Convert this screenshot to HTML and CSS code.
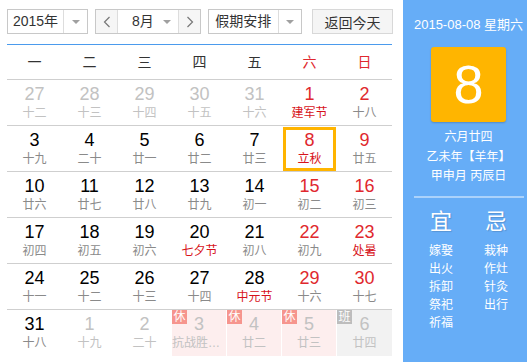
FILE: index.html
```html
<!DOCTYPE html>
<head>
    <meta charset="UTF-8">
    <title>万年历</title>
    <link rel="stylesheet" href="styles.css">
</head>
<body>
    <div class="wrap">
        <div class="main">
            <div class="toolbar">
                <div class="select year">
                    <span class="select-text">2015年</span>
                    <span class="select-arrow"><i class="caret"></i></span>
                </div>
                <div class="select month">
                    <span class="step"><svg width="8" height="12" viewBox="0 0 8 12"><polyline points="6.5,1 1.5,6 6.5,11" fill="none" stroke="#777" stroke-width="1.2"/></svg></span>
                    <span class="select-text month-text">8月<i class="caret"></i></span>
                    <span class="step"><svg width="8" height="12" viewBox="0 0 8 12"><polyline points="1.5,1 6.5,6 1.5,11" fill="none" stroke="#777" stroke-width="1.2"/></svg></span>
                </div>
                <div class="select holiday">
                    <span class="select-text">假期安排</span>
                    <span class="select-arrow"><i class="caret"></i></span>
                </div>
                <button class="today-btn">返回今天</button>
            </div>

            <div class="calendar">
                <div class="week">
                    <span>一</span><span>二</span><span>三</span><span>四</span><span>五</span><span class="red">六</span><span class="red">日</span>
                </div>
                <div class="row">
                    <div class="day other"><b>27</b><em>十二</em></div>
                    <div class="day other"><b>28</b><em>十三</em></div>
                    <div class="day other"><b>29</b><em>十四</em></div>
                    <div class="day other"><b>30</b><em>十五</em></div>
                    <div class="day other"><b>31</b><em>十六</em></div>
                    <div class="day weekend fest"><b>1</b><em>建军节</em></div>
                    <div class="day weekend"><b>2</b><em>十八</em></div>
                </div>
                <div class="row">
                    <div class="day"><b>3</b><em>十九</em></div>
                    <div class="day"><b>4</b><em>二十</em></div>
                    <div class="day"><b>5</b><em>廿一</em></div>
                    <div class="day"><b>6</b><em>廿二</em></div>
                    <div class="day"><b>7</b><em>廿三</em></div>
                    <div class="day weekend fest selected"><b>8</b><em>立秋</em></div>
                    <div class="day weekend"><b>9</b><em>廿五</em></div>
                </div>
                <div class="row">
                    <div class="day"><b>10</b><em>廿六</em></div>
                    <div class="day"><b>11</b><em>廿七</em></div>
                    <div class="day"><b>12</b><em>廿八</em></div>
                    <div class="day"><b>13</b><em>廿九</em></div>
                    <div class="day"><b>14</b><em>初一</em></div>
                    <div class="day weekend"><b>15</b><em>初二</em></div>
                    <div class="day weekend"><b>16</b><em>初三</em></div>
                </div>
                <div class="row">
                    <div class="day"><b>17</b><em>初四</em></div>
                    <div class="day"><b>18</b><em>初五</em></div>
                    <div class="day"><b>19</b><em>初六</em></div>
                    <div class="day fest"><b>20</b><em>七夕节</em></div>
                    <div class="day"><b>21</b><em>初八</em></div>
                    <div class="day weekend"><b>22</b><em>初九</em></div>
                    <div class="day weekend fest"><b>23</b><em>处暑</em></div>
                </div>
                <div class="row">
                    <div class="day"><b>24</b><em>十一</em></div>
                    <div class="day"><b>25</b><em>十二</em></div>
                    <div class="day"><b>26</b><em>十三</em></div>
                    <div class="day"><b>27</b><em>十四</em></div>
                    <div class="day fest"><b>28</b><em>中元节</em></div>
                    <div class="day weekend"><b>29</b><em>十六</em></div>
                    <div class="day weekend"><b>30</b><em>十七</em></div>
                </div>
                <div class="row last">
                    <div class="day"><b>31</b><em>十八</em></div>
                    <div class="day other"><b>1</b><em>十九</em></div>
                    <div class="day other"><b>2</b><em>二十</em></div>
                    <div class="day other rest"><span class="tag">休</span><b>3</b><em class="long">抗战胜…</em></div>
                    <div class="day other rest"><span class="tag">休</span><b>4</b><em>廿二</em></div>
                    <div class="day other rest"><span class="tag">休</span><b>5</b><em>廿三</em></div>
                    <div class="day other work"><span class="tag">班</span><b>6</b><em>廿四</em></div>
                </div>
            </div>
        </div>

        <div class="side">
            <p class="side-date">2015-08-08 星期六</p>
            <div class="big-day">8</div>
            <div class="lunar">
                <p>六月廿四</p>
                <p>乙未年【羊年】</p>
                <p>甲申月 丙辰日</p>
            </div>
            <div class="advice">
                <div class="advice-col">
                    <h2>宜</h2>
                    <p>嫁娶</p>
                    <p>出火</p>
                    <p>拆卸</p>
                    <p>祭祀</p>
                    <p>祈福</p>
                </div>
                <div class="advice-col">
                    <h2>忌</h2>
                    <p>栽种</p>
                    <p>作灶</p>
                    <p>针灸</p>
                    <p>出行</p>
                </div>
            </div>
        </div>
    </div>
</body>
</html>
```
FILE: styles.css
```css
* {
    box-sizing: border-box;
}

body {
    margin: 0;
    font-family: Arial, "Liberation Sans", "Noto Sans CJK SC", sans-serif;
    color: #333;
    background: #fff;
    overflow: hidden;
}

.wrap {
    display: flex;
    width: 527px;
    height: 362px;
}

.main {
    width: 403px;
    padding: 9px 0 0 7px;
}

/* toolbar */

.toolbar {
    display: flex;
    height: 25px;
    margin-bottom: 10px;
}

.select {
    display: flex;
    height: 25px;
    border: 1px solid #c8c8c8;
    background: #fff;
    font-size: 14px;
    line-height: 23px;
}

.select-text {
    text-align: center;
}

.select-arrow {
    width: 24px;
    border-left: 1px solid #ddd;
    display: flex;
    align-items: center;
    justify-content: center;
}

.caret {
    display: inline-block;
    width: 0;
    height: 0;
    border-top: 4px solid #a0a0a0;
    border-left: 4px solid transparent;
    border-right: 4px solid transparent;
}

.year {
    width: 81px;
}

.year .select-text {
    width: 55px;
}

.month {
    width: 106px;
    margin-left: 7px;
}

.step {
    width: 22px;
    background: #f6f6f6;
    display: flex;
    align-items: center;
    justify-content: center;
}

.step:first-child {
    border-right: 1px solid #ddd;
}

.step:last-child {
    border-left: 1px solid #ddd;
}

.month-text {
    flex: 1;
    display: flex;
    align-items: center;
    justify-content: space-between;
    padding: 0 7px 0 14px;
}

.holiday {
    width: 94px;
    margin-left: 7px;
}

.holiday .select-text {
    width: 70px;
}

.today-btn {
    width: 81px;
    height: 25px;
    margin-left: 10px;
    border: 1px solid #d8d8d8;
    background: #f5f5f5;
    font-family: inherit;
    font-size: 14px;
    color: #333;
    padding: 0;
}

/* calendar grid */

.calendar {
    width: 385px;
    border-top: 1px solid #4b9bed;
}

.week,
.row {
    display: grid;
    grid-template-columns: repeat(7, 55px);
    border-bottom: 1px solid #cfcfcf;
}

.week {
    height: 35px;
    font-size: 14px;
    line-height: 34px;
    text-align: center;
}

.week .red {
    color: #e0282e;
}

.row {
    height: 46px;
}

.row.last {
    border-bottom: none;
}

.day {
    position: relative;
    min-width: 0;
    text-align: center;
    padding-top: 4px;
}

.day b {
    display: block;
    font-weight: normal;
    font-size: 18px;
    line-height: 20px;
    color: #000;
}

.day em {
    display: block;
    font-style: normal;
    font-size: 12px;
    line-height: 18px;
    color: #8a8a8a;
    white-space: nowrap;
}

.day em.long {
    text-align: left;
}

.day.weekend b {
    color: #e0282e;
}

.day.fest em {
    color: #d7131b;
}

.day.other b {
    color: #c2c2c2;
}

.day.other em {
    color: #c2c2c2;
}

.day.selected {
    border: 3px solid #ffb400;
    margin: 1px;
    padding-top: 0;
}

.day.rest {
    background: #fdeeee;
    margin-right: 1px;
}

.day.work {
    background: #f2f2f2;
}

.tag {
    position: absolute;
    left: 0;
    top: 0;
    width: 15px;
    height: 14px;
    font-size: 12px;
    line-height: 14px;
    color: #fff;
    background: #f6958e;
}

.work .tag {
    background: #bdbdbd;
}

/* side panel */

.side {
    flex: 1;
    background: #66adf7;
    color: #fff;
    padding-left: 7px;
    display: flex;
    flex-direction: column;
    align-items: center;
}

.side-date {
    margin: 17px 0 0;
    font-size: 13px;
    line-height: 16px;
    white-space: nowrap;
}

.big-day {
    width: 75px;
    height: 75px;
    margin-top: 14px;
    border-radius: 3px;
    background: #ffb500;
    box-shadow: 0 1px 2px rgba(0, 0, 0, 0.2);
    font-size: 54px;
    line-height: 75px;
    text-align: center;
}

.lunar {
    width: 110px;
    margin-top: 6px;
    padding-bottom: 9px;
    border-bottom: 2px solid rgba(255, 255, 255, 0.45);
    text-align: center;
    font-size: 12px;
    line-height: 19.5px;
}

.lunar p {
    margin: 0;
}

.advice {
    display: flex;
    margin-top: 9px;
}

.advice-col {
    width: 55px;
    text-align: center;
}

.advice-col h2 {
    margin: 0 0 5px;
    font-size: 22px;
    font-weight: normal;
    line-height: 30px;
    text-shadow: 1px 1px 1px rgba(0, 0, 0, 0.15);
}

.advice-col p {
    margin: 0;
    font-size: 12px;
    line-height: 18px;
}
```
